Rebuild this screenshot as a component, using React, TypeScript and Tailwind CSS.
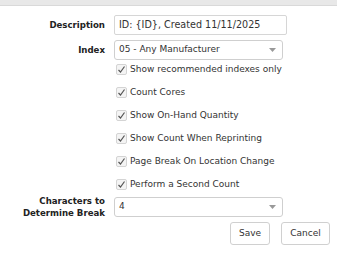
import React from 'react'

const font = { fontFamily: '"DejaVu Sans", Verdana, sans-serif' }

function Check({ label }: { label: string }): React.ReactElement {
  return (
    <label className="flex h-[23px] items-center gap-[3px] text-[9px] text-[#333]">
      <span className="flex h-[11px] w-[11px] items-center justify-center rounded-[2px] border border-[#d4d4d4] bg-[#f4f4f4]">
        <svg width="9" height="9" viewBox="0 0 9 9">
          <path d="M1.5 5 L3.5 7 L7.5 1.5" fill="none" stroke="#555" strokeWidth="1.2" />
        </svg>
      </span>
      <span>{label}</span>
    </label>
  )
}

function Select({ value }: { value: string }): React.ReactElement {
  return (
    <div className="flex h-[20px] w-[169px] items-center justify-between rounded-[3px] border border-[#cfcfcf] bg-white pl-[4px] pr-[6px] text-[9px] text-[#333]">
      <span>{value}</span>
      <svg width="7" height="4" viewBox="0 0 7 4">
        <path d="M0 0 H7 L3.5 4 Z" fill="#999" />
      </svg>
    </div>
  )
}

export default function App(): React.ReactElement {
  const checks = [
    'Show recommended indexes only',
    'Count Cores',
    'Show On-Hand Quantity',
    'Show Count When Reprinting',
    'Page Break On Location Change',
    'Perform a Second Count',
  ]
  return (
    <div className="h-[254px] w-[337px] overflow-hidden bg-white" style={font}>
      <div className="h-[6px] border-b border-[#d9d9d9] bg-[#e8e8e8]" />
      <div className="grid grid-cols-[105px_1fr] gap-x-[9px] pt-[9px]">
        <div className="flex h-[20px] items-center justify-end text-[8.6px] font-bold text-[#222]">Description</div>
        <div className="flex h-[20px] w-[173px] items-center rounded-[2px] border border-[#d6d6d6] pl-[4px] text-[9.6px] text-[#333]">
          ID: {'{ID}'}, Created 11/11/2025
        </div>

        <div className="mt-[5px] flex h-[20px] items-center justify-end text-[8.6px] font-bold text-[#222]">Index</div>
        <div className="mt-[5px]">
          <Select value="05 - Any Manufacturer" />
        </div>

        <div />
        <div className="-mt-[2px] flex flex-col pl-[2px]">
          {checks.map((c) => (
            <Check key={c} label={c} />
          ))}
        </div>

        <div className="-mt-[1px] flex flex-col items-end justify-center text-right text-[8.6px] font-bold leading-[12px] text-[#222]">
          <span>Characters to</span>
          <span>Determine Break</span>
        </div>
        <div className="-mt-[1px] flex items-center">
          <Select value="4" />
        </div>
      </div>
      <div className="mt-[3px] flex justify-end gap-[11px] pr-[7px]">
        <button className="h-[23px] w-[40px] rounded-[3px] border border-[#d0d0d0] bg-white text-[9px] text-[#333]">Save</button>
        <button className="h-[23px] w-[49px] rounded-[3px] border border-[#d0d0d0] bg-white text-[9px] text-[#333]">Cancel</button>
      </div>
    </div>
  )
}
